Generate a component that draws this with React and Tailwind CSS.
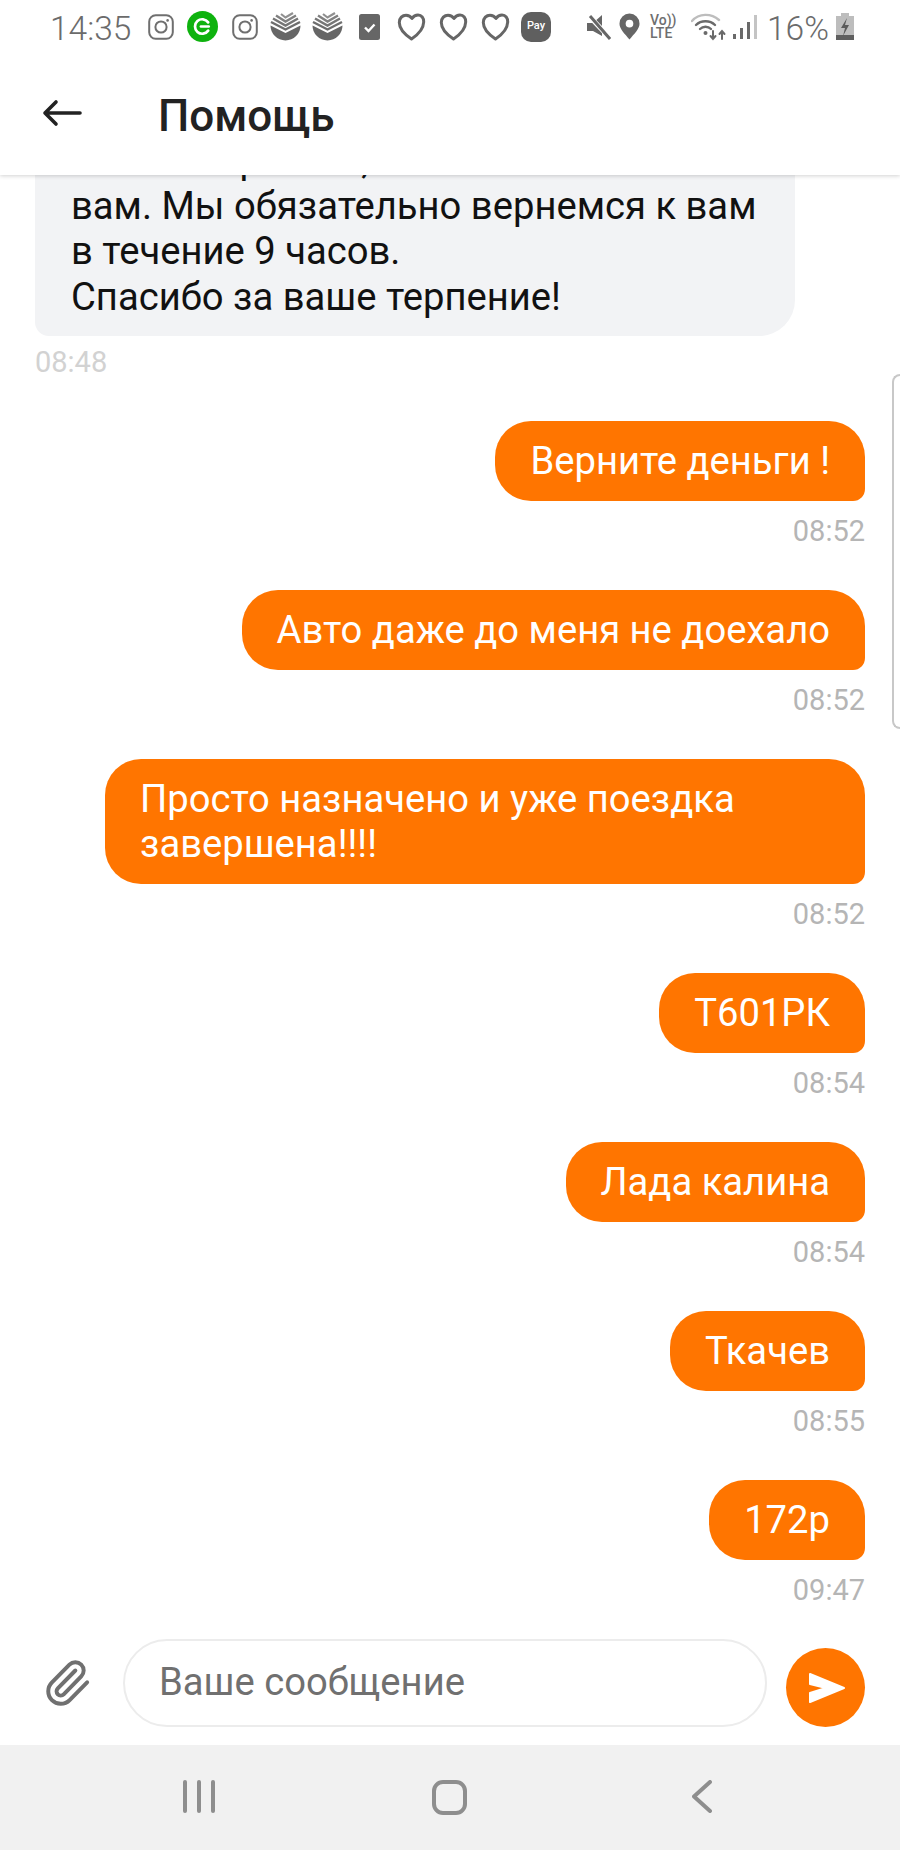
import React from "react";
import { Paperclip } from "lucide-react";

const MESSAGES = [
  { text: "Верните деньги !", time: "08:52" },
  { text: "Авто даже до меня не доехало", time: "08:52" },
  { text: "Просто назначено и уже поездка завершена!!!!", time: "08:52" },
  { text: "Т601РК", time: "08:54" },
  { text: "Лада калина", time: "08:54" },
  { text: "Ткачев", time: "08:55" },
  { text: "172р", time: "09:47" },
];

function Insta({ className }) {
  return (
    <svg viewBox="0 0 26 26" className={className} fill="none" stroke="#6f6f6f" strokeWidth="2">
      <rect x="1.2" y="1.2" width="23.6" height="23.6" rx="6.5" />
      <circle cx="13" cy="13" r="5.6" />
      <circle cx="19.6" cy="6.4" r="1.3" fill="#6f6f6f" stroke="none" />
    </svg>
  );
}

function Sber({ className }) {
  return (
    <svg viewBox="0 0 31 30" className={className} fill="none">
      <path d="M0.5 13.5 L15.5 21 L30.5 13.5 A15 15 0 1 1 0.5 13.5 Z" fill="#666666" />
      <path d="M1 10 L15.5 17.5 L30 10" stroke="#6e6e6e" strokeWidth="2.4" />
      <path d="M3 6.5 L15.5 13.5 L28 6.5" stroke="#767676" strokeWidth="2.4" />
      <path d="M6 3.5 L15.5 9.5 L26 3.5" stroke="#808080" strokeWidth="2.4" />
      <path d="M11 2 L15.5 5.5 L23 1" stroke="#909090" strokeWidth="2.2" />
    </svg>
  );
}

function HeartIcon({ className }) {
  return (
    <svg viewBox="0 0 28 28" className={className} fill="none" stroke="#666666" strokeWidth="3" strokeLinejoin="round">
      <path d="M14 26 C8 22 1.8 16 1.8 9.5 C1.8 5 5 2.2 8.5 2.2 C11 2.2 13 3.2 14.5 5.5 C16 3.2 18 2 20.5 2 C24 2 26.4 5 26.2 9 C26 15.5 20 22 14 26 Z" />
    </svg>
  );
}

function StatusBar() {
  return (
    <div className="flex items-center h-[52px] pl-[50px] pt-[1px] text-[#6b6b6b]">
      <span className="text-[33.5px] leading-none font-light w-[81px] mt-[4px]">14:35</span>
      <Insta className="w-[26px] h-[26px] ml-[17px]" />
      <svg viewBox="0 0 30 30" className="w-[31px] h-[31px] ml-[13px]">
        <circle cx="15" cy="15" r="15" fill="#0eb20e" />
        <path d="M20.5 11 A7 7 0 1 0 20.5 19" fill="none" stroke="#fff" strokeWidth="2.6" strokeLinecap="round" />
        <path d="M13.5 15 H21" stroke="#fff" strokeWidth="2.6" strokeLinecap="round" />
      </svg>
      <Insta className="w-[26px] h-[26px] ml-[14px]" />
      <Sber className="w-[31px] h-[30px] ml-[12px]" />
      <Sber className="w-[31px] h-[30px] ml-[11px]" />
      <svg viewBox="0 0 21 26" className="w-[21px] h-[26px] ml-[16px]">
        <rect width="21" height="26" rx="2.5" fill="#666666" />
        <path d="M6 13.5 L9.5 17 L15.5 10.5" fill="none" stroke="#fff" strokeWidth="2.4" />
      </svg>
      <HeartIcon className="w-[29px] h-[28px] ml-[17px]" />
      <HeartIcon className="w-[29px] h-[28px] ml-[13px]" />
      <HeartIcon className="w-[29px] h-[28px] ml-[13px]" />
      <div className="w-[30px] h-[30px] ml-[11px] rounded-[10px] bg-[#5f5f5f] text-white text-[11px] font-medium flex items-center justify-center">
        Pay
      </div>
      <svg viewBox="0 0 24 26" className="w-[24px] h-[26px] ml-[36px]" fill="#666666">
        <path d="M0 9 H6 L15 1 V22 L6 17 H0 Z" />
        <path d="M3 3 L23 24" stroke="#fff" strokeWidth="5" />
        <path d="M3 2 L23 25" stroke="#666666" strokeWidth="3" />
      </svg>
      <svg viewBox="0 0 22 27" className="w-[21px] h-[27px] ml-[8px]">
        <path d="M11 27 C6 21 0.5 16 0.5 10.5 A10.5 10.5 0 0 1 21.5 10.5 C21.5 16 16 21 11 27 Z" fill="#666666" />
        <circle cx="11" cy="10.5" r="4" fill="#fff" />
      </svg>
      <div className="ml-[10px] w-[28px] text-[14px] leading-[13px] font-medium text-[#6f6f6f] whitespace-nowrap">
        <div>Vo))</div>
        <div>LTE</div>
      </div>
      <svg viewBox="0 0 35 28" className="w-[35px] h-[28px] ml-[13px]" fill="none" strokeLinecap="round">
        <path d="M1 8 C8 0 20 0 28 7" stroke="#bdbdbd" strokeWidth="2.4" />
        <path d="M5 12 C10 7 19 7 24 12" stroke="#6a6a6a" strokeWidth="2.4" />
        <path d="M9 16 C12 13 17 13 20 16" stroke="#6a6a6a" strokeWidth="2.4" />
        <circle cx="14.5" cy="20" r="2" fill="#6a6a6a" />
        <path d="M22 18 V26 M19.5 23 L22 26 L24.5 23" stroke="#6a6a6a" strokeWidth="2" />
        <path d="M31 26 V18 M28.5 21 L31 18 L33.5 21" stroke="#6a6a6a" strokeWidth="2" />
      </svg>
      <svg viewBox="0 0 24 26" className="w-[24px] h-[26px] ml-[7px]">
        <rect x="0" y="20" width="3" height="5" fill="#6a6a6a" />
        <rect x="7" y="14" width="3" height="11" fill="#6a6a6a" />
        <rect x="14" y="8" width="3" height="17" fill="#6a6a6a" />
        <rect x="21" y="1" width="3" height="24" fill="#c4c4c4" />
      </svg>
      <span className="text-[33.5px] leading-none font-light ml-[10px] w-[62px] mt-[4px] whitespace-nowrap">16%</span>
      <svg viewBox="0 0 18 27" className="w-[18px] h-[27px] ml-[7px]">
        <path d="M5 0 H13 V3 H18 V27 H0 V3 H5 Z" fill="#bdbdbd" />
        <rect y="22" width="18" height="5" fill="#5f5f5f" />
        <path d="M11 5 L5 15 H9 L7 23 L13 12 H9 Z" fill="#5a5a5a" />
      </svg>
    </div>
  );
}

function Header() {
  return (
    <div className="relative z-10 bg-white h-[175px] shrink-0 shadow-[0_1px_4px_rgba(0,0,0,0.18)]">
      <StatusBar />
      <div className="flex items-center h-[123px]">
        <svg viewBox="0 0 40 28" className="w-[40px] h-[28px] ml-[42px] -mt-[1px]" fill="none" stroke="#222222" strokeWidth="3.6" strokeLinecap="round" strokeLinejoin="round">
          <path d="M38 14 H3 M14 3 L3 14 L14 25" />
        </svg>
        <h1 className="ml-[76px] mt-[4px] text-[44px] leading-none font-medium text-[#222222]">Помощь</h1>
      </div>
    </div>
  );
}

function Composer() {
  return (
    <div className="flex items-end shrink-0 pl-[46px] pr-[35px] pt-[31px] pb-[18px]">
      <Paperclip size={50} strokeWidth={1.9} className="text-[#707070] self-center -ml-[4px] -mr-[3px]" />
      <div className="ml-[34px] w-[644px] h-[88px] rounded-full border-2 border-[#ececec] flex items-center pl-[34px] text-[38.2px] text-[#707070]">
        Ваше сообщение
      </div>
      <button className="ml-[19px] w-[79px] h-[79px] rounded-full bg-[#ff7500] flex items-center justify-center">
        <svg viewBox="0 0 79 79" className="w-[79px] h-[79px]" fill="#ffffff" stroke="#ffffff" strokeWidth="2" strokeLinejoin="round">
          <path d="M24 26 L58 40 L24 54 V45 L40 40 L24 36 Z" />
        </svg>
      </button>
    </div>
  );
}

export default function App() {
  return (
    <div className="relative flex flex-col h-[1850px] w-[900px] overflow-hidden bg-white font-['Roboto',sans-serif]">
      <Header />
      <div className="flex-1 min-h-0 overflow-hidden flex flex-col justify-end px-[35px]">
        <div className="w-[760px] shrink-0 rounded-t-[36px] rounded-br-[36px] rounded-bl-[14px] bg-[#f2f3f5] px-[36px] pt-[18px] pb-[16px] text-[38.2px] leading-[45.5px] text-[#111111]">
          Заявка в работе, ответим
          <br />
          вам. Мы обязательно вернемся к вам
          <br />
          в течение 9 часов.
          <br />
          Спасибо за ваше терпение!
        </div>
        <div className="shrink-0 mt-[8px] h-[36px] leading-[36px] text-[29px] text-[#d2d2d2]">08:48</div>
        {MESSAGES.map((m, i) => (
          <div key={i} className="shrink-0 flex flex-col items-end mt-[41px]">
            <div className="max-w-[760px] rounded-t-[36px] rounded-bl-[36px] rounded-br-[12px] bg-[#ff7500] px-[35px] py-[17.5px] text-[38.2px] leading-[45px] text-white">
              {m.text}
            </div>
            <div className="mt-[12px] h-[36px] leading-[36px] text-[29px] text-[#b5b5b5]">{m.time}</div>
          </div>
        ))}
      </div>
      <Composer />
      <div className="h-[105px] shrink-0 bg-[#f1f1f1] flex items-start pt-[35px]">
        <div className="flex gap-[10px] ml-[183px] h-[33px]">
          <div className="w-[4px] h-[33px] rounded-full bg-[#8e8e8e]" />
          <div className="w-[4px] h-[33px] rounded-full bg-[#8e8e8e]" />
          <div className="w-[4px] h-[33px] rounded-full bg-[#8e8e8e]" />
        </div>
        <div className="ml-[217px] w-[35px] h-[35px] rounded-[11px] border-[4px] border-[#8e8e8e]" />
        <svg viewBox="0 0 20 33" className="ml-[225px] w-[20px] h-[33px]" fill="none" stroke="#8e8e8e" strokeWidth="4" strokeLinecap="round" strokeLinejoin="round">
          <path d="M18 2 L2 16.5 L18 31" />
        </svg>
      </div>
      <div className="absolute top-[374px] right-0 w-[8px] h-[355px] border-l-2 border-y-2 border-[#c8c8c8] rounded-l-[10px]" />
    </div>
  );
}
